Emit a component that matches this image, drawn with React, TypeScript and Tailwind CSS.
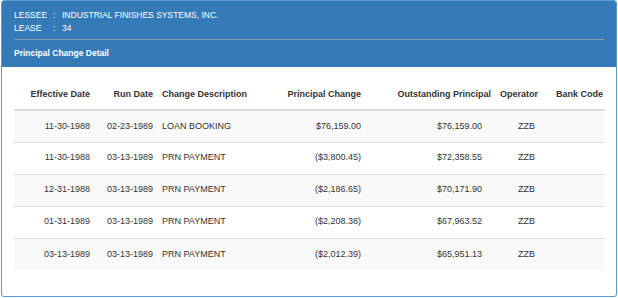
import React from "react";

interface Change {
  effective: string;
  run: string;
  desc: string;
  change: string;
  outstanding: string;
  operator: string;
  bank: string;
}

const changes: Change[] = [
  { effective: "11-30-1988", run: "02-23-1989", desc: "LOAN BOOKING", change: "$76,159.00", outstanding: "$76,159.00", operator: "ZZB", bank: "" },
  { effective: "11-30-1988", run: "03-13-1989", desc: "PRN PAYMENT", change: "($3,800.45)", outstanding: "$72,358.55", operator: "ZZB", bank: "" },
  { effective: "12-31-1988", run: "03-13-1989", desc: "PRN PAYMENT", change: "($2,186.65)", outstanding: "$70,171.90", operator: "ZZB", bank: "" },
  { effective: "01-31-1989", run: "03-13-1989", desc: "PRN PAYMENT", change: "($2,208.38)", outstanding: "$67,963.52", operator: "ZZB", bank: "" },
  { effective: "03-13-1989", run: "03-13-1989", desc: "PRN PAYMENT", change: "($2,012.39)", outstanding: "$65,951.13", operator: "ZZB", bank: "" },
];

export default function App() {
  return (
    <div className="w-[618px] h-[298px] bg-white font-['Liberation_Sans',Arial,sans-serif] pl-[1px] pr-[1px]">
      <div className="h-[297px] border border-[#5b9bd5] rounded-[3px] overflow-hidden bg-white">
        {/* Panel heading */}
        <div className="bg-[#337ab7] text-white h-[66px] px-[12px]">
          <div className="pt-[8px] text-[8.5px] leading-[13px]">
            <div className="flex">
              <span className="w-[39px]">LESSEE</span>
              <span className="w-[9px]">:</span>
              <span>INDUSTRIAL FINISHES SYSTEMS, INC.</span>
            </div>
            <div className="flex">
              <span className="w-[39px]">LEASE</span>
              <span className="w-[9px]">:</span>
              <span>34</span>
            </div>
          </div>
          <div className="mt-[4px] h-px bg-[#8b9bab]" />
          <div className="pt-[7px] text-[8.5px] font-bold leading-[12px]">Principal Change Detail</div>
        </div>

        {/* Table */}
        <div className="px-[12px] pt-[13px]">
          <table className="w-[591px] table-fixed border-collapse text-[9px] text-[#333]">
            <colgroup>
              <col className="w-[81px]" />
              <col className="w-[62px]" />
              <col className="w-[93px]" />
              <col className="w-[116px]" />
              <col className="w-[130px]" />
              <col className="w-[49px]" />
              <col className="w-[60px]" />
            </colgroup>
            <thead>
              <tr className="h-[30px] border-b-2 border-[#ddd] font-bold">
                <th className="text-right pr-[5px] font-bold">Effective Date</th>
                <th className="text-right pr-[4px] font-bold">Run Date</th>
                <th className="text-left pl-[5px] font-bold whitespace-nowrap">Change Description</th>
                <th className="text-right pr-[5px] font-bold">Principal Change</th>
                <th className="text-right pr-[5px] font-bold whitespace-nowrap">Outstanding Principal</th>
                <th className="text-left pl-[4px] font-bold">Operator</th>
                <th className="text-left pl-[11px] font-bold whitespace-nowrap">Bank Code</th>
              </tr>
            </thead>
            <tbody>
              {changes.map((c, i) => (
                <tr
                  key={i}
                  className={
                    (i % 2 === 0 ? "bg-[#f9f9f9] " : "bg-white ") +
                    (i === 0 ? "h-[32px]" : "h-[32px] border-t border-[#ddd]")
                  }
                >
                  <td className="text-right pr-[5px]">{c.effective}</td>
                  <td className="text-right pr-[4px]">{c.run}</td>
                  <td className="text-left pl-[5px]">{c.desc}</td>
                  <td className="text-right pr-[5px]">{c.change}</td>
                  <td className="text-right pr-[14px]">{c.outstanding}</td>
                  <td className="text-left pl-[22px]">{c.operator}</td>
                  <td className="text-left pl-[11px]">{c.bank}</td>
                </tr>
              ))}
            </tbody>
          </table>
        </div>
      </div>
    </div>
  );
}
